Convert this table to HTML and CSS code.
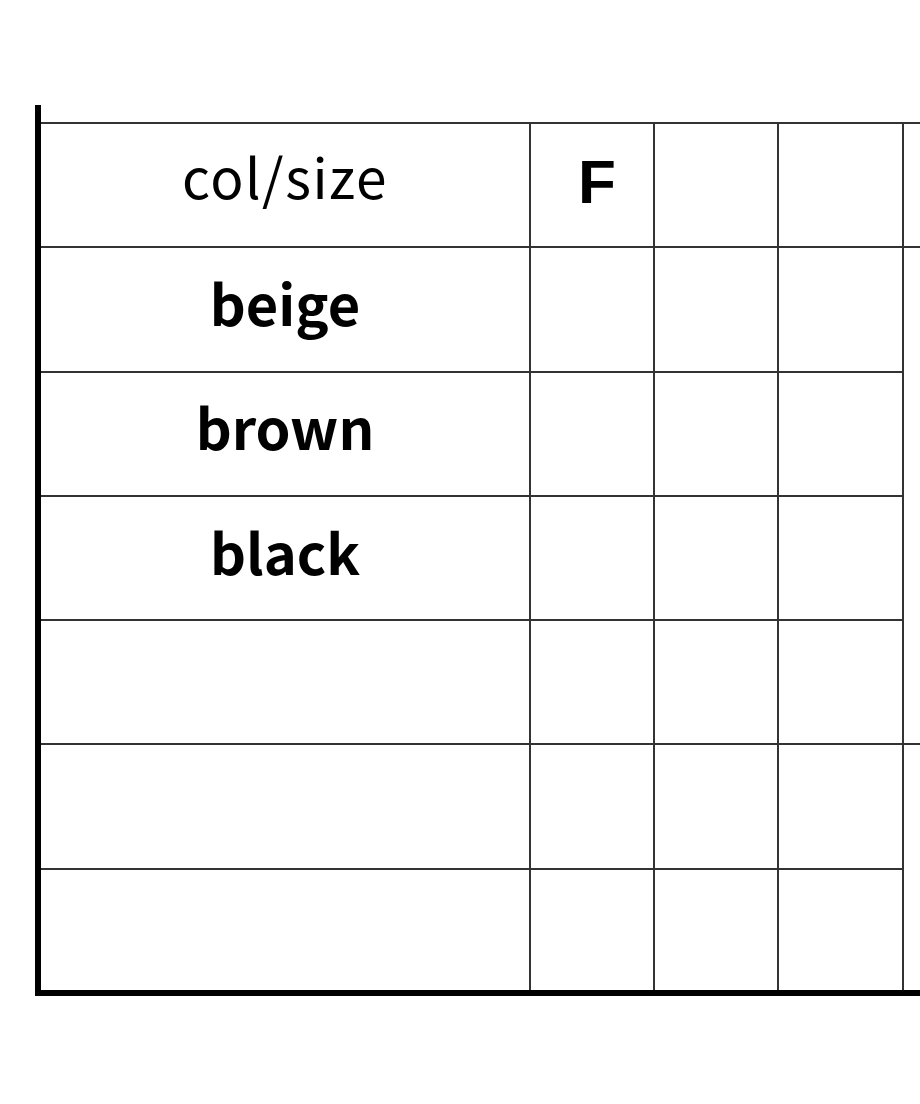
FILE: index.html
```html
<!DOCTYPE html>
<html lang="ja">
<head>
<meta charset="utf-8">
<title>col/size</title>
<link rel="stylesheet" href="styles.css">
</head>
<body>
<div class="sheet">
  <div class="grid">
    <div class="cell head-label">col/size</div>
    <div class="cell size">F</div>
    <div class="cell"></div>
    <div class="cell"></div>
    <div class="cell c5 r1"></div>

    <div class="cell color">beige</div>
    <div class="cell"></div>
    <div class="cell"></div>
    <div class="cell"></div>
    <div class="cell c5 r2"></div>

    <div class="cell color">brown</div>
    <div class="cell"></div>
    <div class="cell"></div>
    <div class="cell"></div>

    <div class="cell color">black</div>
    <div class="cell"></div>
    <div class="cell"></div>
    <div class="cell"></div>

    <div class="cell"></div>
    <div class="cell"></div>
    <div class="cell"></div>
    <div class="cell"></div>

    <div class="cell"></div>
    <div class="cell"></div>
    <div class="cell"></div>
    <div class="cell"></div>
    <div class="cell c5 r6"></div>

    <div class="cell"></div>
    <div class="cell"></div>
    <div class="cell"></div>
    <div class="cell"></div>
  </div>
</div>
</body>
</html>
```

FILE: styles.css
```css
html, body {
  margin: 0;
  padding: 0;
  background: #fff;
}
body {
  width: 920px;
  height: 1104px;
  overflow: hidden;
  font-family: "Noto Sans CJK JP", "Noto Sans", sans-serif;
  color: #000;
}
.sheet {
  margin: 105px 0 0 35px;
  padding-top: 17px;
  border-left: 6px solid #000;
  border-bottom: 6px solid #000;
  width: 879px;
  overflow: hidden;
}
.grid {
  display: grid;
  grid-template-columns: 488px 122px 122px 123px 1fr;
  grid-template-rows: repeat(6, 122.3px) 120px;
  gap: 2px;
  background: #333;
  border-top: 2px solid #333;
}
.cell {
  background: #fff;
  display: flex;
  align-items: center;
  justify-content: center;
}
.c5 { grid-column: 5; }
.r1 { grid-row: 1; }
.r2 { grid-row: 2 / span 4; }
.r6 { grid-row: 6 / span 2; }
.head-label {
  font-size: 55px;
  font-weight: 400;
  letter-spacing: 1.5px;
  padding-bottom: 20px;
}
.size {
  font-family: "Liberation Sans", Arial, sans-serif;
  font-weight: 700;
  font-size: 62px;
  padding-left: 10px;
  padding-bottom: 8px;
}
.color {
  font-size: 56px;
  font-weight: 700;
  padding-bottom: 16px;
}
```
